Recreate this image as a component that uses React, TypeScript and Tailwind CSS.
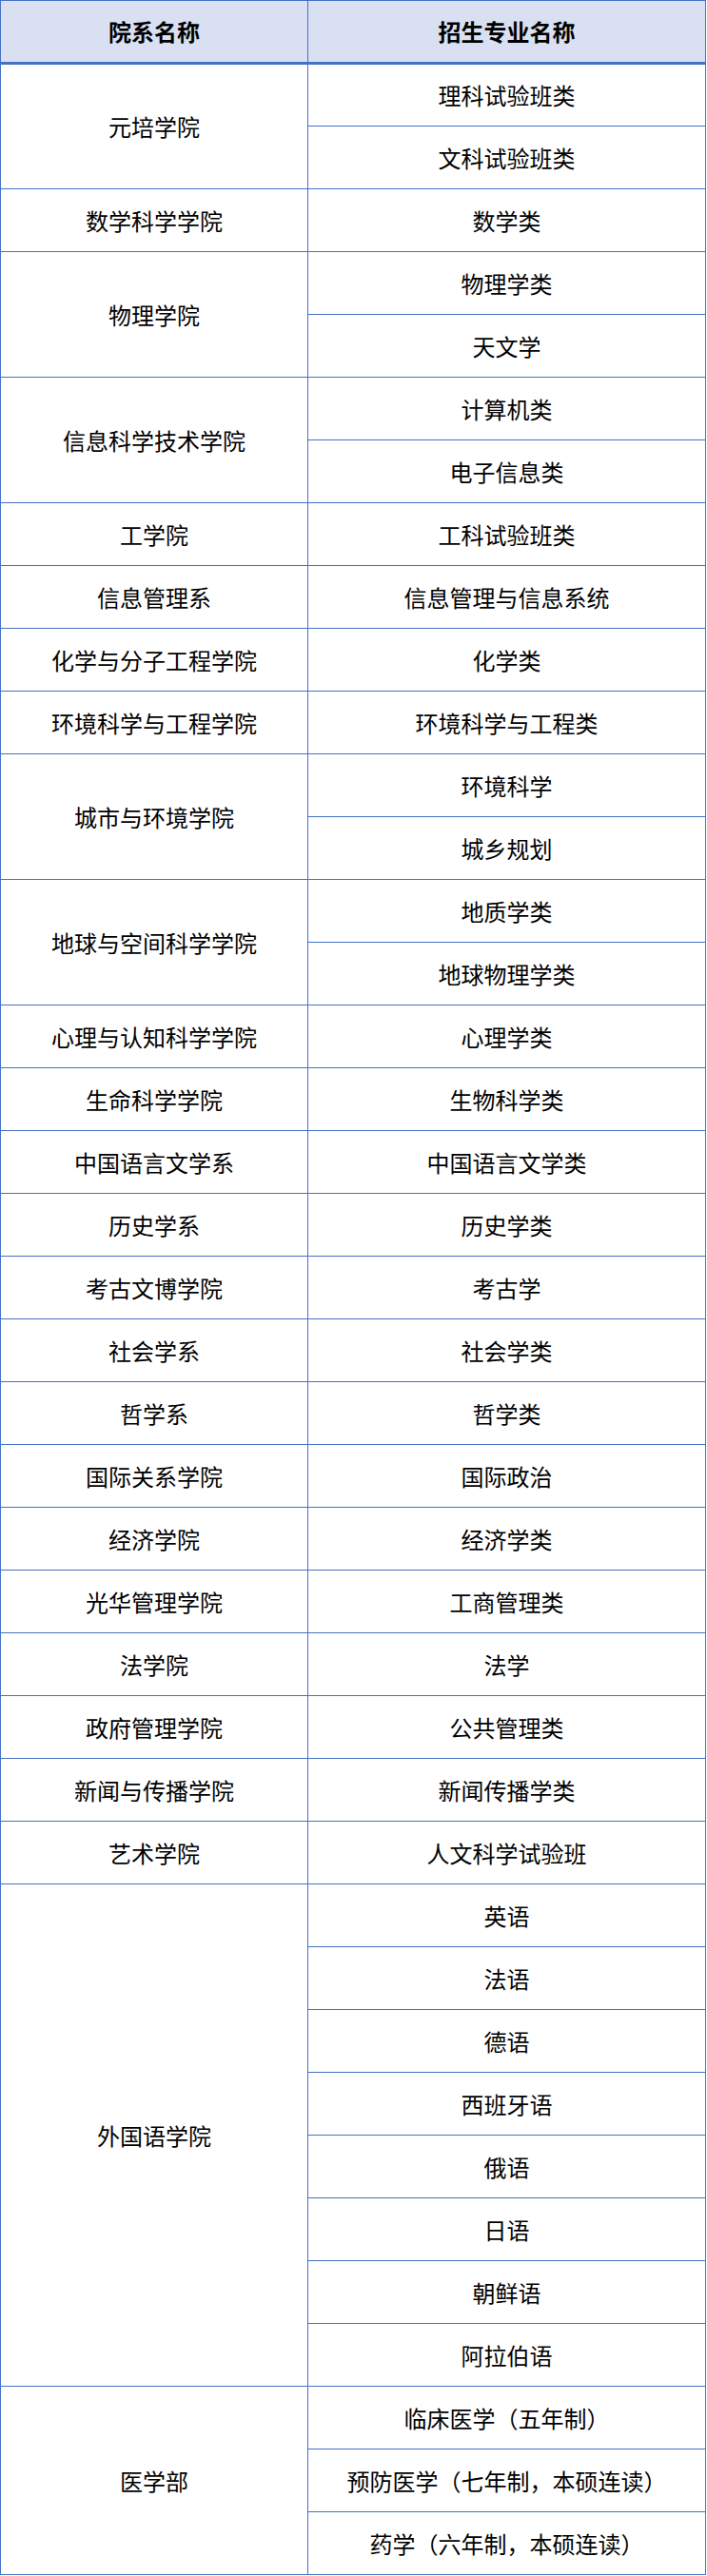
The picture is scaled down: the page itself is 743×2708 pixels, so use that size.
const groups: { name: string; majors: string[] }[] = [
  { name: '元培学院', majors: ['理科试验班类', '文科试验班类'] },
  { name: '数学科学学院', majors: ['数学类'] },
  { name: '物理学院', majors: ['物理学类', '天文学'] },
  { name: '信息科学技术学院', majors: ['计算机类', '电子信息类'] },
  { name: '工学院', majors: ['工科试验班类'] },
  { name: '信息管理系', majors: ['信息管理与信息系统'] },
  { name: '化学与分子工程学院', majors: ['化学类'] },
  { name: '环境科学与工程学院', majors: ['环境科学与工程类'] },
  { name: '城市与环境学院', majors: ['环境科学', '城乡规划'] },
  { name: '地球与空间科学学院', majors: ['地质学类', '地球物理学类'] },
  { name: '心理与认知科学学院', majors: ['心理学类'] },
  { name: '生命科学学院', majors: ['生物科学类'] },
  { name: '中国语言文学系', majors: ['中国语言文学类'] },
  { name: '历史学系', majors: ['历史学类'] },
  { name: '考古文博学院', majors: ['考古学'] },
  { name: '社会学系', majors: ['社会学类'] },
  { name: '哲学系', majors: ['哲学类'] },
  { name: '国际关系学院', majors: ['国际政治'] },
  { name: '经济学院', majors: ['经济学类'] },
  { name: '光华管理学院', majors: ['工商管理类'] },
  { name: '法学院', majors: ['法学'] },
  { name: '政府管理学院', majors: ['公共管理类'] },
  { name: '新闻与传播学院', majors: ['新闻传播学类'] },
  { name: '艺术学院', majors: ['人文科学试验班'] },
  {
    name: '外国语学院',
    majors: ['英语', '法语', '德语', '西班牙语', '俄语', '日语', '朝鲜语', '阿拉伯语']
  },
  {
    name: '医学部',
    majors: ['临床医学（五年制）', '预防医学（七年制，本硕连读）', '药学（六年制，本硕连读）']
  }
];

const App = () => {
  return (
    <div
      className="w-[743px] bg-white text-black"
      style={{ fontFamily: '"Noto Sans CJK SC", "Noto Sans", sans-serif' }}
    >
      <div className="w-[742px] border-x border-t border-[#4472c4]">
        {/* header */}
        <div className="flex h-[67px] border-b-[3px] border-[#4472c4] bg-[#d9e0f2] text-[24px] font-bold">
          <div className="flex w-[323px] items-center justify-center border-r border-[#4472c4]">院系名称</div>
          <div className="flex flex-1 items-center justify-center">招生专业名称</div>
        </div>

        {groups.map((g, gi) => (
          <div key={g.name} className="flex text-[24px]">
            <div className="flex w-[323px] items-center justify-center border-r border-b border-[#4472c4]">
              {g.name}
            </div>
            <div className="flex flex-1 flex-col">
              {g.majors.map((m, mi) => (
                <div
                  key={m}
                  className={`flex items-center justify-center border-b border-[#4472c4] ${
                    gi === 0 && mi === 0 ? 'h-[65px]' : 'h-[66px]'
                  }`}
                >
                  {m}
                </div>
              ))}
            </div>
          </div>
        ))}
      </div>
    </div>
  );
};

export default App;
